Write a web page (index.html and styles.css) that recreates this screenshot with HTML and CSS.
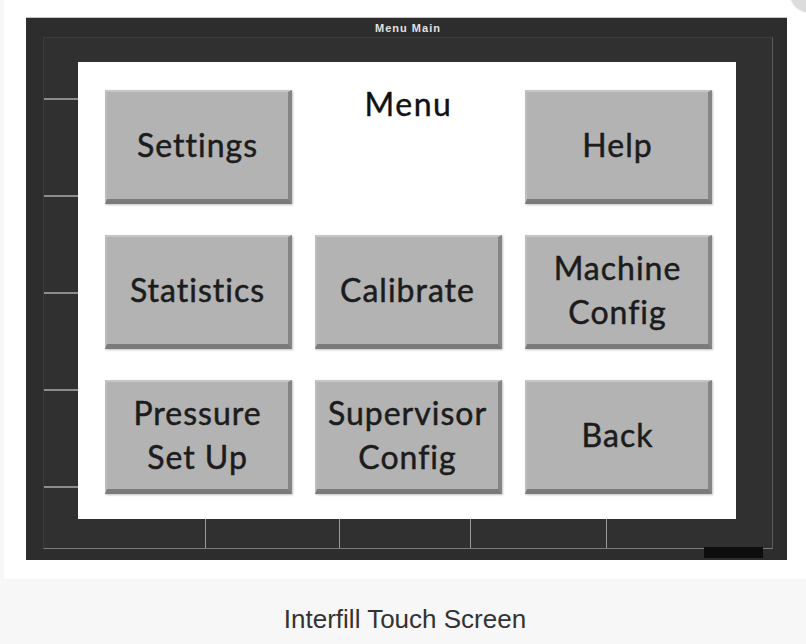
FILE: index.html
```html
<!DOCTYPE html>
<html>
<head>
    <title>Interfill Touch Screen</title>
    <link rel="stylesheet" href="styles.css">
</head>
<body>
    <div class="photo">
        <span class="close-btn"></span>
        <div class="hmi">
            <div class="hmi-title">Menu Main</div>
            <div class="hmi-body">
                <div class="ticks">
                    <i></i><i></i><i></i><i></i><i></i>
                </div>
                <div class="screen">
                    <div class="menu-grid">
                        <button class="key">Settings</button>
                        <div class="menu-title">Menu</div>
                        <button class="key">Help</button>
                        <button class="key">Statistics</button>
                        <button class="key">Calibrate</button>
                        <button class="key">Machine<br>Config</button>
                        <button class="key">Pressure<br>Set Up</button>
                        <button class="key">Supervisor<br>Config</button>
                        <button class="key">Back</button>
                    </div>
                </div>
                <div class="softkeys">
                    <span></span><span></span><span></span><span></span><span></span>
                </div>
                <span class="led"></span>
            </div>
        </div>
    </div>
    <p class="caption">Interfill Touch Screen</p>
</body>
</html>
```

FILE: styles.css
```css
body {
    margin: 0;
    background-color: #f7f7f7;
    font-family: 'Liberation Sans', Arial, sans-serif;
    overflow: hidden;
}

.photo {
    position: relative;
    box-sizing: border-box;
    height: 579px;
    margin-left: 4px;
    padding: 18px 0 0 22px;
    background-color: #fff;
    overflow: hidden;
}

.close-btn {
    position: absolute;
    top: -28px;
    right: -24px;
    width: 40px;
    height: 40px;
    border-radius: 50%;
    background-color: #dcdcdc;
    box-shadow: 0 0 2px rgba(0, 0, 0, 0.3);
}

.hmi {
    width: 761px;
    height: 542px;
    box-sizing: border-box;
    padding: 0 14px 11px 17px;
    background-color: #2d2d2d;
    box-shadow: 0 -1px 0 #c4c4c4;
}

.hmi-title {
    height: 19px;
    box-sizing: border-box;
    padding-top: 2px;
    line-height: 17px;
    text-align: center;
    font-size: 11px;
    font-weight: bold;
    color: #e2e2e2;
    letter-spacing: 1px;
}

.hmi-body {
    position: relative;
    display: grid;
    grid-template-columns: 34px 658px 1fr;
    grid-template-rows: 24px 457px 1fr;
    height: 512px;
    box-sizing: border-box;
    border: 1px solid #3c3c3c;
    border-right-color: #5c5c5c;
    border-bottom-color: #7c7c7c;
    background-color: #303030;
}

.ticks {
    grid-column: 1;
    grid-row: 2;
    display: flex;
    flex-direction: column;
    gap: 95px;
    padding-top: 36px;
}

.ticks i {
    display: block;
    height: 2px;
    background-color: #8c8c8c;
}

.screen {
    grid-column: 2;
    grid-row: 2;
    background-color: #fff;
    padding: 28px 0 0 27px;
}

.menu-grid {
    display: grid;
    grid-template-columns: repeat(3, 187px);
    grid-auto-rows: 114px;
    column-gap: 23px;
    row-gap: 31px;
}

.menu-title {
    margin-top: -2px;
    text-align: center;
    font-family: Lato, 'Open Sans', sans-serif;
    font-size: 32px;
    line-height: 32px;
    letter-spacing: 1.5px;
    color: #111;
    -webkit-text-stroke: 0.4px #111;
}

.key {
    box-sizing: border-box;
    margin: 0;
    padding: 0 0 2px;
    background-color: #b3b3b3;
    border-style: solid;
    border-width: 2px 4px 5px 2px;
    border-color: #c6c6c6 #858585 #7b7b7b #bdbdbd;
    box-shadow: 1px 1px 2px rgba(0, 0, 0, 0.25);
    font-family: Lato, 'Open Sans', sans-serif;
    font-size: 32px;
    line-height: 44px;
    letter-spacing: 1px;
    color: #1c1c1c;
    -webkit-text-stroke: 0.5px #1c1c1c;
}

.softkeys {
    grid-column: 2;
    grid-row: 3;
    display: grid;
    grid-template-columns: 127px 134px 131px 136px 1fr;
}

.softkeys span + span {
    border-left: 1px solid #9a9a9a;
}

.led {
    position: absolute;
    left: 660px;
    top: 509px;
    width: 59px;
    height: 11px;
    background-color: #0d0d0d;
}

.caption {
    margin: 0 0 0 4px;
    padding-top: 25px;
    text-align: center;
    font-size: 26px;
    line-height: 30px;
    color: #333;
}
```
